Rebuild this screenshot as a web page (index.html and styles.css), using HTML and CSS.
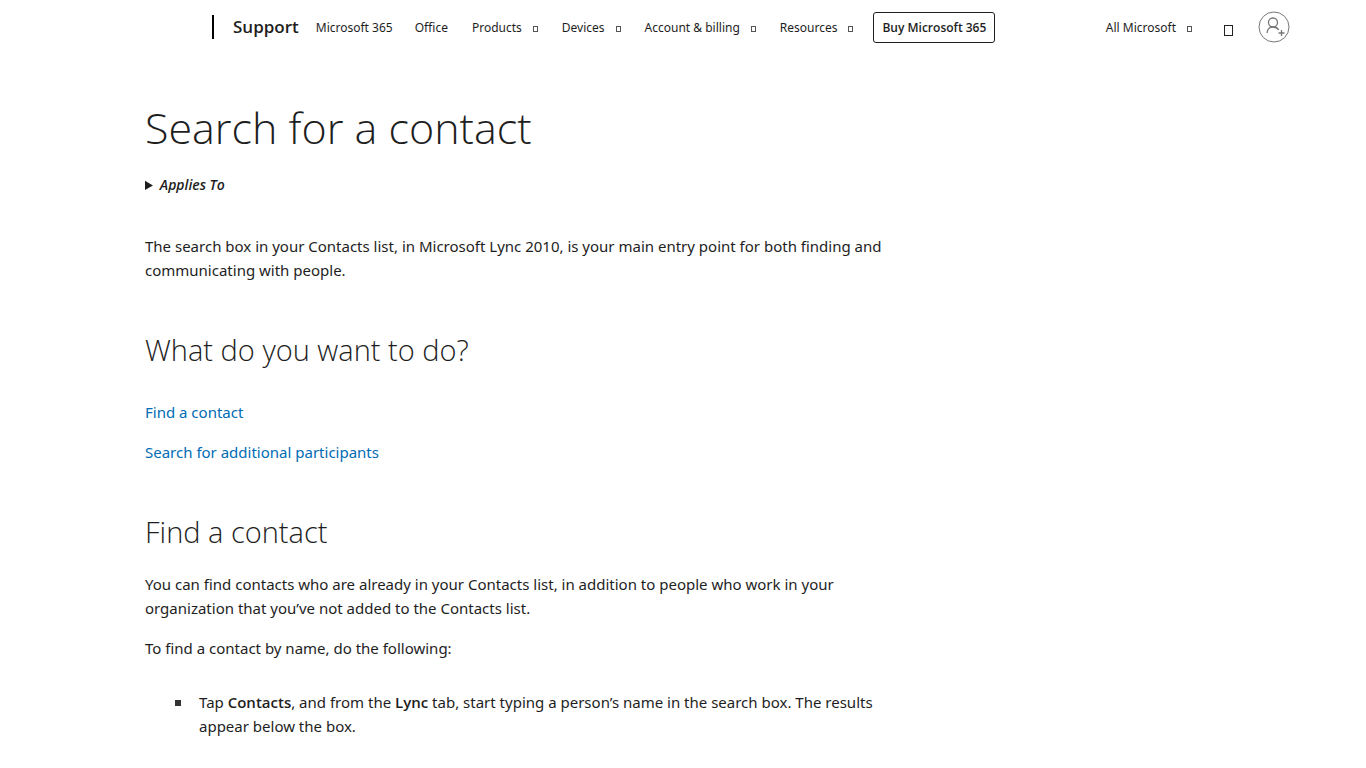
FILE: index.html
```html
<!DOCTYPE html>
<html lang="en">
<head>
<meta charset="utf-8">
<title>Search for a contact</title>
<link rel="stylesheet" href="styles.css">
</head>
<body>
<header class="header">
  <span class="divider"></span>
  <a class="brand" href="#">Support</a>
  <nav class="nav">
    <a class="nav-link" href="#">Microsoft 365</a>
    <a class="nav-link" href="#">Office</a>
    <button class="nav-link menu" type="button">Products</button>
    <button class="nav-link menu" type="button">Devices</button>
    <button class="nav-link menu" type="button">Account &amp; billing</button>
    <button class="nav-link menu" type="button">Resources</button>
  </nav>
  <a class="buy" href="#">Buy Microsoft 365</a>
  <div class="tools">
    <button class="nav-link menu" type="button">All Microsoft</button>
    <button class="search" type="button" aria-label="Search"></button>
    <a class="account" href="#" aria-label="Sign in">
      <svg width="32" height="32" viewBox="0 0 32 32" fill="none" stroke="#777">
        <circle cx="16" cy="16" r="15"/>
        <circle cx="15" cy="11.500" r="4.500" stroke-width="1.300"/>
        <path d="M9 22c.3-3.800 2.800-6 6-6 2.600 0 4.600 1.100 5.700 3M23.500 19v6M20.500 22h6" stroke-width="1.300"/>
      </svg>
    </a>
  </div>
</header>
<main class="article">
  <h1 class="title">Search for a contact</h1>
  <details class="applies"><summary>Applies To</summary></details>
  <p class="text">The search box in your Contacts list, in Microsoft Lync 2010, is your main entry point for both finding and communicating with people.</p>
  <h2 class="heading">What do you want to do?</h2>
  <p class="text jump"><a class="link" href="#find">Find a contact</a></p>
  <p class="text"><a class="link" href="#search">Search for additional participants</a></p>
  <h2 class="heading" id="find">Find a contact</h2>
  <p class="text">You can find contacts who are already in your Contacts list, in addition to people who work in your organization that you’ve not added to the Contacts list.</p>
  <p class="text">To find a contact by name, do the following:</p>
  <ul class="steps">
    <li>Tap <b>Contacts</b>, and from the <b>Lync</b> tab, start typing a person’s name in the search box. The results appear below the box.</li>
  </ul>
</main>
</body>
</html>
```
FILE: styles.css
```css
*, *::before, *::after { box-sizing: border-box; }
body {
  margin: 0;
  background: #fff;
  color: #1e1e1e;
  font-family: "Noto Sans", "Open Sans", sans-serif;
  font-size: 15px;
  line-height: 24px;
}
a { color: inherit; text-decoration: none; }
b { font-family: "Open Sans", sans-serif; font-weight: 600; }
button { padding: 0; border: 0; background: none; color: inherit; font: inherit; }
.header {
  display: flex;
  align-items: center;
  height: 54px;
  padding: 0 76px 0 212px;
}
.divider { width: 2px; height: 24px; background: #000; }
.brand { margin: 0 17px 0 19px; font-family: "Open Sans", sans-serif; font-size: 17px; font-weight: 600; }
.nav { display: flex; gap: 22px; }
.nav-link { padding-top: 2px; font-size: 12px; line-height: 24px; white-space: nowrap; }
.menu { display: flex; align-items: center; gap: 11px; }
.nav .menu { padding-left: 2px; }
.menu::after {
  content: "";
  width: 5px;
  height: 6px;
  margin-top: 2px;
  border: 1px solid #555;
}
.buy {
  margin-left: 20px;
  padding: 0 8px;
  border: 1px solid #1e1e1e;
  border-radius: 3px;
  font-family: "Open Sans", sans-serif;
  font-size: 12px;
  font-weight: 600;
  line-height: 29px;
  white-space: nowrap;
}
.tools { display: flex; align-items: center; margin-left: auto; }
.search {
  width: 9px;
  height: 11px;
  margin: 6px 25px 0 32px;
  border: 1px solid #222;
}
.account { display: flex; }
.article { max-width: 896px; padding: 44px 0 0 145px; }
.title { margin: 0; font-family: "Open Sans", sans-serif; font-size: 43px; font-weight: 300; line-height: 60px; }
.applies { margin: 15px 0 37px; font-family: "Open Sans", sans-serif; font-size: 14px; font-style: italic; font-weight: 600; }
.text { margin: 0 0 16px; }
.heading { margin: 48px 0 20px; font-family: "Open Sans", sans-serif; font-size: 29px; font-weight: 300; line-height: 40px; }
.jump { margin-top: 30px; }
.link { color: #006cb4; }
.steps { margin: 30px 0 0; padding-left: 54px; list-style: none; }
.steps li::before {
  content: "";
  float: left;
  width: 6px;
  height: 6px;
  margin: 10px 0 0 -24px;
  background: #333;
}
```
